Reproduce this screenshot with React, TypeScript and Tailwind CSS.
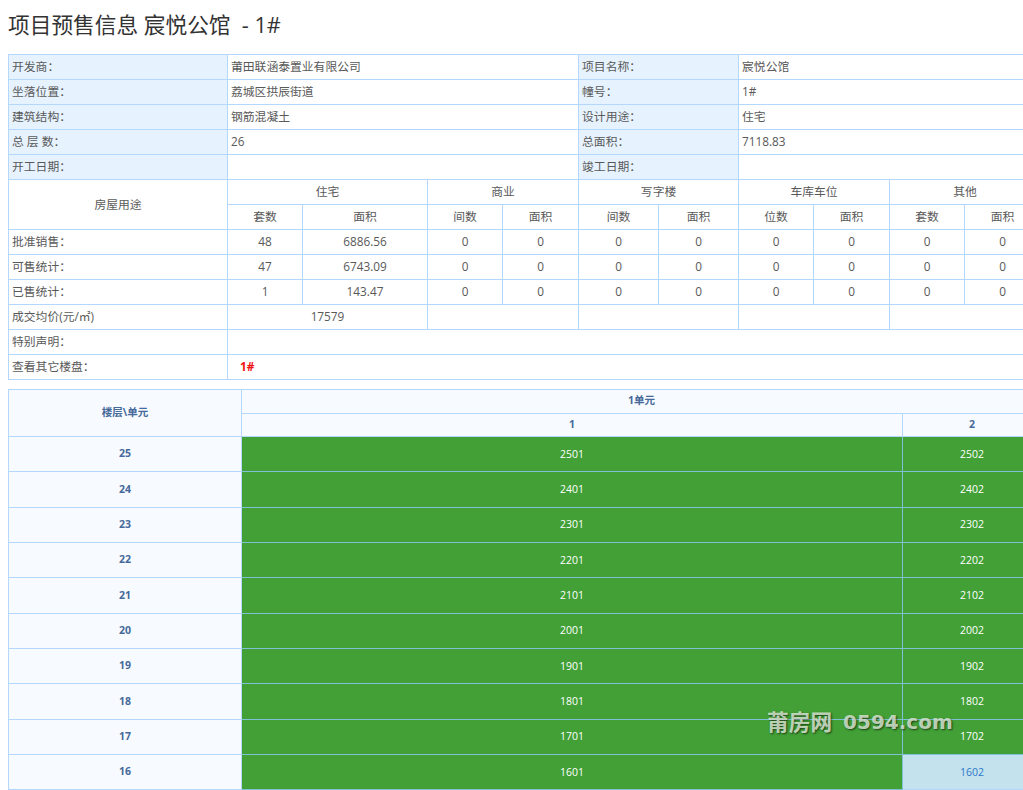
const infoRows = [
  ['开发商：', '莆田联涵泰置业有限公司', '项目名称：', '宸悦公馆'],
  ['坐落位置：', '荔城区拱辰街道', '幢号：', '1#'],
  ['建筑结构：', '钢筋混凝土', '设计用途：', '住宅'],
  ['总 层 数：', '26', '总面积：', '7118.83'],
  ['开工日期：', '', '竣工日期：', ''],
]

const usageGroups = ['住宅', '商业', '写字楼', '车库车位', '其他']
const usageHeads = ['套数', '面积', '间数', '面积', '间数', '面积', '位数', '面积', '套数', '面积']

const statRows = [
  ['批准销售：', '48', '6886.56'],
  ['可售统计：', '47', '6743.09'],
  ['已售统计：', '1', '143.47'],
]

const floors = [25, 24, 23, 22, 21, 20, 19, 18, 17, 16]
const colWidths = [219, 75, 125, 75, 76, 80, 80, 75, 76, 75, 76]

const cell = 'border border-[#b3d7fd] px-[3px] py-0 text-[11.8px] leading-none text-[#595959]'
const label = `${cell} bg-[#e6f2fd]`
const center = `${cell} text-center`
const floorHead = 'border border-[#b3d7fd] bg-[#f7fbff] text-center text-[10.5px] font-bold text-[#46699a]'
const sold = 'border border-[#7fc1d6] bg-[#42a036] pt-px text-center text-[10.5px] text-white'
const free = 'border border-[#b3d7fd] bg-[#c3e2ee] pt-px text-center text-[10.5px] text-[#2f78c8]'

export default function App() {
  return (
    <div className="relative h-[790px] w-[1023px] overflow-hidden bg-white font-['Open_Sans','Noto_Sans_CJK_SC',sans-serif]">
      <div className="px-2 pt-[9px]">
        <h1 className="h-[45px] text-[21.7px] leading-[31px] font-normal whitespace-pre text-[#333]">项目预售信息 宸悦公馆  - 1#</h1>

        <table className="w-[1032px] table-fixed border-collapse">
          <colgroup>
            {colWidths.map((w, i) => (
              <col key={i} style={{ width: w }} />
            ))}
          </colgroup>
          <tbody>
            {infoRows.map((row) => (
              <tr key={row[0]} className="h-[25px]">
                <td className={label}>{row[0]}</td>
                <td colSpan={4} className={cell}>{row[1]}</td>
                <td colSpan={2} className={label}>{row[2]}</td>
                <td colSpan={4} className={cell}>{row[3]}</td>
              </tr>
            ))}

            <tr className="h-[25px]">
              <td rowSpan={2} className={center}>房屋用途</td>
              {usageGroups.map((g) => (
                <td key={g} colSpan={2} className={center}>{g}</td>
              ))}
            </tr>
            <tr className="h-[25px]">
              {usageHeads.map((h, i) => (
                <td key={i} className={center}>{h}</td>
              ))}
            </tr>

            {statRows.map((row) => (
              <tr key={row[0]} className="h-[25px]">
                <td className={cell}>{row[0]}</td>
                <td className={center}>{row[1]}</td>
                <td className={center}>{row[2]}</td>
                {Array.from({ length: 8 }).map((_, i) => (
                  <td key={i} className={center}>0</td>
                ))}
              </tr>
            ))}

            <tr className="h-[25px]">
              <td className={cell}>成交均价(元/㎡)</td>
              <td colSpan={2} className={center}>17579</td>
              <td colSpan={2} className={cell}></td>
              <td colSpan={2} className={cell}></td>
              <td colSpan={2} className={cell}></td>
              <td colSpan={2} className={cell}></td>
            </tr>
            <tr className="h-[25px]">
              <td className={cell}>特别声明：</td>
              <td colSpan={10} className={cell}></td>
            </tr>
            <tr className="h-[25px]">
              <td className={cell}>查看其它楼盘：</td>
              <td colSpan={10} className={cell}>
                <span className="ml-[9px] font-bold text-[#f01414]">1#</span>
              </td>
            </tr>
          </tbody>
        </table>

        <table className="mt-[9px] w-[1033px] table-fixed border-collapse">
          <colgroup>
            <col className="w-[233px]" />
            <col className="w-[661px]" />
            <col className="w-[139px]" />
          </colgroup>
          <tbody>
            <tr className="h-[23.5px]">
              <td rowSpan={2} className={floorHead}>楼层\单元</td>
              <td colSpan={2} className={floorHead}>1单元</td>
            </tr>
            <tr className="h-[23.5px]">
              <td className={floorHead}>1</td>
              <td className={floorHead}>2</td>
            </tr>
            {floors.map((f) => (
              <tr key={f} className="h-[35.33px]">
                <td className={floorHead}>{f}</td>
                <td className={sold}>{f}01</td>
                <td className={f === 16 ? free : sold}>{f}02</td>
              </tr>
            ))}
          </tbody>
        </table>
      </div>

      <div className="absolute top-[708px] left-[767px] flex items-center gap-[11px] leading-[28px] font-bold whitespace-pre text-[#e4eede]/80 [text-shadow:1px_1px_2px_rgba(0,0,0,0.6)]">
        <span className="text-[21.7px]">莆房网</span>
        <span className="font-['DejaVu_Sans',sans-serif] text-[20px]">0594.com</span>
      </div>
    </div>
  )
}
